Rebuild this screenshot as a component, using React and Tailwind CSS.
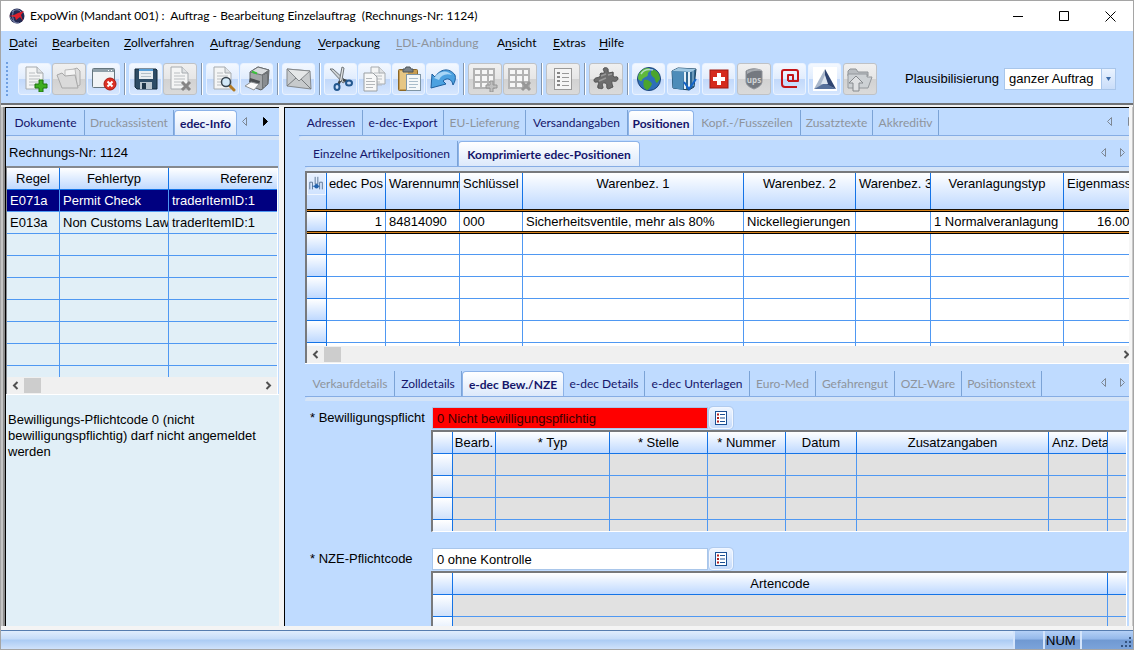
import React from "react";
import clsx from "clsx";

/* ---------- toolbar icons ---------- */

const Icon = ({ children }) => (
  <svg width="26" height="26" viewBox="0 0 26 26" aria-hidden="true">
    {children}
  </svg>
);

const Page = ({ x = 4, y = 1, w = 17, h = 22 }) => (
  <g>
    <path
      d={`M${x} ${y}h${w - 6}l6 6v${h - 6}h-${w}z`}
      fill="#f4f5f5"
      stroke="#a6abaf"
    />
    <path d={`M${x + w - 6} ${y}v6h6`} fill="#dfe2e4" stroke="#a6abaf" />
    <path
      d={`M${x + 3} ${y + 6}h6M${x + 3} ${y + 9}h${w - 6}M${x + 3} ${y + 12}h${w - 6}M${x + 3} ${y + 15}h${w - 8}M${x + 3} ${y + 18}h${w - 6}`}
      stroke="#b9bdc0"
    />
  </g>
);

const NewIcon = () => (
  <Icon>
    <Page />
    <path
      d="M17 14h4v4h4v4h-4v4h-4v-4h-4v-4h4z"
      fill="#3fae1f"
      stroke="#1f7410"
    />
  </Icon>
);

const OpenIcon = () => (
  <Icon>
    <path d="M13 5l8-3 3 3v14l-4 2z" fill="#dedede" stroke="#ababab" />
    <path d="M9 4l10-1 2 15H9z" fill="#f4f4f4" stroke="#bababa" />
    <path d="M1 9l5-2 3 3 10-1 3 13H6z" fill="#dadada" stroke="#a8a8a8" />
  </Icon>
);

const CloseWindowIcon = () => (
  <Icon>
    <rect x="1.500" y="2.500" width="22" height="19" rx="1" fill="#f1f4f6" stroke="#66767e" />
    <path d="M2 3h21v3H2z" fill="#8fa0aa" />
    <path d="M17 4.500h1M20 4.500h1" stroke="#fff" />
    <circle cx="19" cy="18" r="6" fill="#dc3023" stroke="#a81a12" />
    <path d="M16.500 15.500l5 5M21.500 15.500l-5 5" stroke="#fff" strokeWidth="2" />
  </Icon>
);

const SaveIcon = () => (
  <Icon>
    <path d="M2 3h21l1 1v19H4l-2-2z" fill="#2d4c66" stroke="#152b3d" />
    <rect x="6" y="3" width="14" height="10" fill="#e9eef2" />
    <path d="M6 4h14" stroke="#5aa0d8" strokeWidth="2" />
    <path d="M8 7.500h10M8 10.500h10" stroke="#b3bfc8" />
    <rect x="7" y="16" width="12" height="7" fill="#b9c5ce" />
    <rect x="9" y="17" width="4" height="6" fill="#1d3447" />
  </Icon>
);

const DeleteDocIcon = () => (
  <Icon>
    <Page />
    <path d="M15 16l8 8M23 16l-8 8" stroke="#858585" strokeWidth="3" />
  </Icon>
);

const PreviewIcon = () => (
  <Icon>
    <Page />
    <path d="M20 20l4 4" stroke="#b27a24" strokeWidth="3" strokeLinecap="round" />
    <circle cx="16" cy="16" r="4.500" fill="#d3e9f8" stroke="#38444d" strokeWidth="1.500" />
  </Icon>
);

const PrinterIcon = () => (
  <Icon>
    <path d="M6 6l8-5 11 3-1 14-7 6-11-4z" fill="#a3a6a8" stroke="#5d6164" />
    <path d="M6 6l8-5 11 3-7 5z" fill="#d9dcde" stroke="#6a6e71" />
    <path d="M18 9l7-5-1 14-6 6z" fill="#6f7376" />
    <path d="M20 9v12M22 8v11" stroke="#a2a6a9" />
    <path d="M8 5.500l5 2" stroke="#3cc23c" strokeWidth="2" />
    <path d="M6 12l10 3-1 4-10-3z" fill="#4a4e51" />
    <path d="M1 20l6-4 8 2-5 6z" fill="#fafafa" stroke="#8d9194" />
  </Icon>
);

const MailIcon = () => (
  <Icon>
    <path d="M1 3l23 2 1 18-24 -3z" fill="#c7cacc" stroke="#85898c" />
    <path d="M1 20l9-8M25 23l-10-10" stroke="#777b7e" />
    <path d="M1 3l12 12L24 5z" fill="#e5e7e8" stroke="#85898c" />
  </Icon>
);

const CutIcon = () => (
  <Icon>
    <path d="M2 3l3 0 13 12-3 2z" fill="#cdd1d4" stroke="#6e7478" />
    <path d="M14 1l2 1-2 12-3 3z" fill="#e4e6e8" stroke="#6e7478" />
    <path d="M15 14l4 1M12 15l-2 4" stroke="#3d4347" strokeWidth="2.500" />
    <ellipse cx="21" cy="17" rx="3" ry="2.500" fill="none" stroke="#24588f" strokeWidth="2" />
    <ellipse cx="9" cy="21" rx="2.500" ry="3" fill="none" stroke="#24588f" strokeWidth="2" />
  </Icon>
);

const CopyIcon = () => (
  <Icon>
    <Page x={9} y={1} w={14} h={17} />
    <path d="M2 7h9l4 4v14H2z" fill="#f7f8f8" stroke="#9a9fa3" />
    <path d="M4 12.500h6M4 15.500h9M4 18.500h9M4 21.500h7" stroke="#b3b7ba" />
  </Icon>
);

const PasteIcon = () => (
  <Icon>
    <rect x="2.500" y="3.500" width="19" height="21" rx="1" fill="#c99d52" stroke="#8b6726" />
    <path d="M4 5h8v18H4z" fill="#e6c684" />
    <path d="M7 3h2l1-2h4l1 2h2v3H7z" fill="#7a8288" stroke="#4d5459" />
    <rect x="10.500" y="8.500" width="14" height="16" fill="#f5f8fa" stroke="#7f95a5" />
    <path d="M13 12.500h9M13 15.500h9M13 18.500h9M13 21.500h7" stroke="#a9bccb" />
  </Icon>
);

const UndoIcon = () => (
  <Icon>
    <path
      d="M1 22l1-14 3 3C10 3 19 1 25 9c1 3 0 7-2 10-1-6-6-8-10-4l3 3z"
      fill="#4ba1e0"
      stroke="#1d5f9e"
    />
    <path d="M4 12c6-8 13-8 18-3-6-2-11 0-13 5z" fill="#a8d6f6" />
  </Icon>
);

const GridBase = () => (
  <g>
    <rect x="1" y="2" width="22" height="21" fill="#b3b3b3" />
    <path
      d="M3 4h5v4H3zM10 4h5v4h-5zM17 4h4v4h-4zM3 10h5v5H3zM10 10h5v5h-5zM17 10h4v5h-4zM3 17h5v4H3zM10 17h5v4h-5zM17 17h4v4h-4z"
      fill="#f6f6f6"
    />
  </g>
);

const GridAddIcon = () => (
  <Icon>
    <GridBase />
    <path d="M18 15h3v4h4v3h-4v4h-3v-4h-4v-3h4z" fill="#c0c0c0" stroke="#949494" />
  </Icon>
);

const GridRemoveIcon = () => (
  <Icon>
    <GridBase />
    <path d="M15 16l8 8M23 16l-8 8" stroke="#979797" strokeWidth="3" />
  </Icon>
);

const ListIcon = () => (
  <Icon>
    <rect x="4.500" y="2.500" width="17" height="21" fill="#f5f5f5" stroke="#999" />
    <path d="M7 7h3M7 11h3M7 15h3M7 19h3" stroke="#858585" strokeWidth="2" />
    <path d="M12 7.500h7M12 11.500h7M12 15.500h7M12 19.500h7" stroke="#999" />
  </Icon>
);

const PuzzleIcon = () => (
  <Icon>
    <path
      d="M7 8c1-2 3 0 4-1 1-2-2-3 0-5 2-1 5 0 4 3 0 2 2 2 5 1 1 2-1 4 1 5 2 0 3-1 4 1 0 3-3 4-5 3-2 0-1 3 0 6-3 1-5 3-6 1s1-4-2-5-3 2-2 4c0 2-1 2-5 1-1-3 2-5 0-6-2 0-4 1-4-2 1-3 4-2 5-3 2 0 1-2 1-3z"
      fill="#6d6d6d"
      stroke="#4f4f4f"
    />
    <path d="M8 10l5-2M15 9l4-1M6 15l7-3" stroke="#9a9a9a" strokeWidth="1.500" />
  </Icon>
);

const GlobeIcon = () => (
  <Icon>
    <circle cx="13" cy="13" r="11.500" fill="#2e6fb8" stroke="#1b4379" />
    <path d="M5 5c4-4 9-3 9-2 1 3-3 3-2 6-2 3-5 2-6 5 0 2-2 1-4-1 0-4 1-6 3-8z" fill="#5fb93c" />
    <path d="M16 4c4-1 8 4 8 9l-3 4c-3-2-1-5-4-6-2-2-3-4-1-7zM8 14c4-1 7 2 8 4-2 4-4 6-5 6-4-2-4-6-3-10z" fill="#4ba52c" />
    <path d="M5 8c3-5 8-5 12-4" stroke="#d5ecff" strokeWidth="1.500" fill="none" opacity=".7" />
  </Icon>
);

const BooksIcon = () => (
  <Icon>
    <path d="M1 5l6-3 18 1-2 18-5 3-16-2z" fill="#2f6690" stroke="#1b435f" />
    <path d="M1 5l12 1-1 18-10-2z" fill="#4d8cb9" />
    <path d="M7 2l18 1-5 3-19-1z" fill="#9fc8e3" />
    <path d="M14 6v17M18 6v17" stroke="#e5f1f8" strokeWidth="2" />
    <path d="M22 4v16" stroke="#a8cde5" />
    <path d="M13 16l5 7 7-10" stroke="#1464c8" strokeWidth="2" fill="none" />
  </Icon>
);

const SwissIcon = () => (
  <Icon>
    <rect x="4" y="4" width="18" height="18" fill="#d52b1e" stroke="#9f1a12" />
    <path d="M11 7h4v4h4v4h-4v4h-4v-4H7v-4h4z" fill="#fff" />
  </Icon>
);

const UpsIcon = () => (
  <Icon>
    <path d="M5 5c5-3 11-3 16 0v10c0 4-3 6-8 8-5-2-8-4-8-8z" fill="#747980" stroke="#8f9398" />
    <path d="M6 8c4-3 9-4 15-3v-1C16 2 10 3 6 5z" fill="#a8acb1" />
    <text x="13" y="17" textAnchor="middle" fontFamily="Open Sans" fontWeight="700" fontSize="8" fill="#d0d3d6">
      ups
    </text>
  </Icon>
);

const SpiralIcon = () => (
  <Icon>
    <path
      d="M11 15V9h5v6h-5M16 15h5V6q0-2-2-2H7Q5 4 5 6v12q0 3 3 3h12"
      fill="none"
      stroke="#c41418"
      strokeWidth="2"
      strokeLinejoin="round"
    />
  </Icon>
);

const TriangleIcon = () => (
  <Icon>
    <path d="M1 1h24v24H1z" fill="#fff" />
    <path d="M13 3L2 23l11-5z" fill="#a9b7cb" />
    <path d="M13 3l11 20-11-5z" fill="#2f4470" />
    <path d="M2 23l11-6 11 6z" fill="#56709b" />
    <path d="M13 9l-4 9h7z" fill="#dde5ef" />
  </Icon>
);

const UploadIcon = () => (
  <Icon>
    <path d="M1 5l2-2h6l2 3h10v4H1z" fill="#b9bdc1" stroke="#8f9397" />
    <path d="M1 22V8h19v3h5l-4 11z" fill="#cdd1d4" stroke="#94989c" />
    <path d="M9 10l7 7h-4v8H6v-8H2z" fill="#dfe1e3" stroke="#85898d" />
  </Icon>
);

const ListBoxIcon = () => (
  <svg width="14" height="16" viewBox="0 0 14 16" aria-hidden="true">
    <rect x="1.500" y="1.500" width="11" height="13" fill="#fff" stroke="#1b4f93" />
    <path d="M3 4.500h2M3 8h2M3 11.500h2" stroke="#b01c1c" strokeWidth="2" />
    <path d="M6 4.500h5M6 8h5M6 11.500h5" stroke="#1b4f93" />
  </svg>
);

const Logo = () => (
  <svg width="16" height="16" viewBox="0 0 16 16" aria-hidden="true">
    <circle cx="8" cy="8" r="7.500" fill="#232a52" />
    <path d="M3 4c3-3 7-3 9 0M1 9c2 4 5 6 9 6M5 2c-2 4-2 8 1 13" stroke="#7d86ad" fill="none" />
    <path d="M0 8l5-1 4-2 6-2-3 4 2 6-3-4-4 3-1-3z" fill="#e0202c" />
  </svg>
);

/* ---------- data ---------- */

const menus = [
  { label: "Datei", width: "w-[43px]" },
  { label: "Bearbeiten", width: "w-[72px]" },
  { label: "Zollverfahren", width: "w-[86px]" },
  { label: "Auftrag/Sendung", width: "w-[108px]" },
  { label: "Verpackung", width: "w-[78px]" },
  { label: "LDL-Anbindung", width: "w-[101px]", disabled: true },
  { label: "Ansicht", width: "w-[56px]", accel: 1 },
  { label: "Extras", width: "w-[46px]" },
  { label: "Hilfe", width: "w-[40px]" },
];

const toolGroups = [
  [
    { title: "Neu", icon: NewIcon },
    { title: "Öffnen", icon: OpenIcon, disabled: true },
    { title: "Schliessen", icon: CloseWindowIcon },
  ],
  [
    { title: "Speichern", icon: SaveIcon },
    { title: "Löschen", icon: DeleteDocIcon, disabled: true },
  ],
  [
    { title: "Vorschau", icon: PreviewIcon },
    { title: "Drucken", icon: PrinterIcon },
  ],
  [{ title: "E-Mail", icon: MailIcon }],
  [
    { title: "Ausschneiden", icon: CutIcon },
    { title: "Kopieren", icon: CopyIcon },
    { title: "Einfügen", icon: PasteIcon },
    { title: "Rückgängig", icon: UndoIcon },
  ],
  [
    { title: "Zeile einfügen", icon: GridAddIcon, disabled: true },
    { title: "Zeile löschen", icon: GridRemoveIcon, disabled: true },
  ],
  [{ title: "Liste", icon: ListIcon, disabled: true }],
  [{ title: "Module", icon: PuzzleIcon, disabled: true }],
  [
    { title: "Internet", icon: GlobeIcon },
    { title: "Archiv", icon: BooksIcon },
    { title: "Zoll", icon: SwissIcon },
    { title: "UPS", icon: UpsIcon, disabled: true },
    { title: "e-dec", icon: SpiralIcon },
    { title: "Atlas", icon: TriangleIcon },
    { title: "Hochladen", icon: UploadIcon, disabled: true },
  ],
];

const leftTabs = [
  { label: "Dokumente", width: "w-[78px]" },
  { label: "Druckassistent", width: "w-[89px]", disabled: true },
  { label: "edec-Info", width: "w-[63px]", active: true },
];

const mainTabs = [
  { label: "Adressen", width: "w-[63px]" },
  { label: "e-dec-Export", width: "w-[81px]" },
  { label: "EU-Lieferung", width: "w-[82px]", disabled: true },
  { label: "Versandangaben", width: "w-[102px]" },
  { label: "Positionen", width: "w-[66px]", active: true },
  { label: "Kopf.-/Fusszeilen", width: "w-[107px]", disabled: true },
  { label: "Zusatztexte", width: "w-[72px]", disabled: true },
  { label: "Akkreditiv", width: "w-[66px]", disabled: true },
];

const positionTabs = [
  { label: "Einzelne Artikelpositionen", width: "w-[152px]" },
  { label: "Komprimierte edec-Positionen", width: "w-[182px]", active: true },
];

const detailTabs = [
  { label: "Verkaufdetails", width: "w-[89px]", disabled: true },
  { label: "Zolldetails", width: "w-[67px]" },
  { label: "e-dec Bew./NZE", width: "w-[102px]", active: true },
  { label: "e-dec Details", width: "w-[81px]" },
  { label: "e-dec Unterlagen", width: "w-[105px]" },
  { label: "Euro-Med", width: "w-[66px]", disabled: true },
  { label: "Gefahrengut", width: "w-[79px]", disabled: true },
  { label: "OZL-Ware", width: "w-[67px]", disabled: true },
  { label: "Positionstext", width: "w-[80px]", disabled: true },
];

const positionColumns = [
  { label: "edec Pos", width: "w-[59px]", value: "1", align: "text-right" },
  { label: "Warennummer", width: "w-[74px]", value: "84814090", left: true },
  { label: "Schlüssel", width: "w-[63px]", value: "000", left: true },
  { label: "Warenbez. 1", width: "w-[221px]", value: "Sicherheitsventile, mehr als 80%" },
  { label: "Warenbez. 2", width: "w-[112px]", value: "Nickellegierungen" },
  { label: "Warenbez. 3", width: "w-[75px]", value: "", left: true },
  { label: "Veranlagungstyp", width: "w-[133px]", value: "1 Normalveranlagung" },
  { label: "Eigenmasse", width: "w-auto", value: "16.000", left: true, align: "indent-[30px]" },
];

const permitColumns = [
  { label: "", width: "w-[20px]" },
  { label: "Bearb.", width: "w-[43px]" },
  { label: "* Typ", width: "w-[114px]" },
  { label: "* Stelle", width: "w-[98px]" },
  { label: "* Nummer", width: "w-[78px]" },
  { label: "Datum", width: "w-[71px]" },
  { label: "Zusatzangaben", width: "w-auto" },
  { label: "Anz. Details", width: "w-[59px]", left: true },
  { label: "", width: "w-[18px]" },
];

const nzeColumns = [
  { label: "", width: "w-[20px]" },
  { label: "Artencode", width: "w-auto" },
  { label: "", width: "w-[18px]" },
];

const errors = [
  ["E071a", "Permit Check", "traderItemID:1"],
  ["E013a", "Non Customs Law", "traderItemID:1"],
];

/* ---------- building blocks ---------- */

const ToolButton = ({ title, icon: Glyph, disabled }) => (
  <button
    title={title}
    disabled={disabled}
    className={clsx(
      "flex h-8 items-center justify-center rounded-[3px] border",
      disabled
        ? "w-[34px] border-[#bfc2c6] bg-[linear-gradient(#f0f0f0,#e6e6e6_50%,#d2d2d2_50%,#dadada)]"
        : "w-[33px] border-[#e9f2ff] bg-[linear-gradient(#f3f8ff,#e0ecfd_50%,#c1d8fa_50%,#d5e6fe)]"
    )}
  >
    <Glyph />
  </button>
);

const Arrow = ({ dir, solid }) => (
  <svg width="7" height="11" viewBox="0 0 7 11" aria-hidden="true" className="shrink-0">
    <path
      d={dir === "left" ? "M5.500 1.500v8l-4-4z" : "M1.500 1.500v8l4-4z"}
      fill={solid ? "#000" : "none"}
      stroke={solid ? "#000" : "#7d8794"}
    />
  </svg>
);

const TabStrip = ({ tabs, children }) => (
  <div>
    <div className="flex h-7 items-end border-b border-[#86ade4]">
      <div role="tablist" className="flex min-w-0 flex-1 items-end overflow-hidden pl-px">
        {tabs.map((tab) => (
          <button
            key={tab.label}
            role="tab"
            aria-selected={!!tab.active}
            disabled={tab.disabled}
            className={clsx(
              "h-[25px] shrink-0 pt-px text-center font-['Lato',sans-serif] text-[12px] whitespace-nowrap",
              tab.width,
              tab.active
                ? "rounded-t-sm border border-b-0 border-[#8db3e8] bg-linear-to-b from-white to-[#dce9fb] font-bold text-[#15156a]"
                : "border-r border-[#7ba3d6]",
              !tab.active && (tab.disabled ? "text-[#8e949c]" : "text-[#15156a]")
            )}
          >
            {tab.label}
          </button>
        ))}
      </div>
      <div className="flex h-full shrink-0 items-center">{children}</div>
    </div>
    <div className="h-1 rounded-tl-md bg-[#d5e4f7]" />
  </div>
);

const HEAD =
  "overflow-hidden border-r border-b border-[#1473e6] bg-linear-to-b from-white to-[#bfd9ff] p-0 text-center align-top font-normal whitespace-nowrap";

const Scrollbar = ({ right = true }) => (
  <div className="flex h-[17px] shrink-0 items-center bg-[#f0f0f0]">
    <button aria-label="Nach links" className="flex w-[17px] justify-center">
      <svg width="7" height="9" viewBox="0 0 7 9">
        <path d="M5.500 1L2 4.500 5.500 8" fill="none" stroke="#505050" strokeWidth="2" />
      </svg>
    </button>
    <div className="h-[15px] w-[17px] bg-[#cdcdcd]" />
    <div className="flex-1" />
    <button
      aria-label="Nach rechts"
      className={clsx("flex justify-center", right ? "w-[17px]" : "w-[6px]")}
    >
      <svg width="7" height="9" viewBox="0 0 7 9" className="shrink-0">
        <path d="M1.500 1L5 4.500 1.500 8" fill="none" stroke="#505050" strokeWidth="2" />
      </svg>
    </button>
  </div>
);

const MarkerRow = () => (
  <tr aria-hidden="true">
    <td
      colSpan={9}
      className="h-[3px] bg-[linear-gradient(#1d1204_1px,#d9821a_1px,#d9821a_2px,#000_2px)] p-0"
    />
  </tr>
);

const EmptyGrid = ({ label, columns, rows }) => (
  <table aria-label={label} className="w-full table-fixed border-separate border-spacing-0 bg-[#e1e1e1]">
    <thead>
      <tr>
        {columns.map((col, i) => (
          <th
            key={i}
            scope="col"
            className={clsx(
              HEAD,
              "h-[22px] leading-[21px] last:border-r-0",
              col.width,
              col.left && "pl-[3px] text-left"
            )}
          >
            {col.label}
          </th>
        ))}
      </tr>
    </thead>
    <tbody>
      {Array.from({ length: rows }, (_, r) => (
        <tr key={r}>
          {columns.map((col, i) => (
            <td
              key={i}
              className={clsx(
                "h-[22px] border-r border-b p-0 last:border-r-0",
                i === 0
                  ? "border-[#1473e6] bg-linear-to-b from-white to-[#cfe1fb]"
                  : "border-[#4f98f2]"
              )}
            />
          ))}
        </tr>
      ))}
    </tbody>
  </table>
);

const CodeField = ({ id, label, value, invalid }) => (
  <div className="flex h-[22px] items-center">
    <label htmlFor={id} className="w-[127px] shrink-0 pl-[5px] whitespace-nowrap">
      {label}
    </label>
    <input
      id={id}
      defaultValue={value}
      className={clsx(
        "h-[22px] w-[276px] border border-[#a9c6ea] px-1 outline-none",
        invalid ? "bg-[#ff0000] text-[#3a0000]" : "bg-white"
      )}
    />
    <button
      aria-label={`${label} Auswahl`}
      className="ml-px flex h-[22px] w-6 items-center justify-center rounded-sm border border-[#f2f7ff] bg-linear-to-b from-[#eef5ff] to-[#c6dbfa] shadow-[0_0_0_1px_#b1cbee]"
    >
      <ListBoxIcon />
    </button>
  </div>
);

/* ---------- window parts ---------- */

const TitleBar = () => (
  <header className="flex h-[30px] shrink-0 items-center bg-white pl-2 font-['Lato',sans-serif] text-[12px]">
    <Logo />
    <h1 className="ml-[5px] flex-1 whitespace-pre">
      {"ExpoWin (Mandant 001) :  Auftrag - Bearbeitung Einzelauftrag  (Rechnungs-Nr: 1124)"}
    </h1>
    <button aria-label="Minimieren" className="flex w-[46px] justify-center">
      <svg width="10" height="10"><path d="M0 5.500h10" stroke="#000" /></svg>
    </button>
    <button aria-label="Maximieren" className="flex w-[46px] justify-center">
      <svg width="10" height="10"><path d="M.5.5h9v9h-9z" fill="none" stroke="#000" /></svg>
    </button>
    <button aria-label="Schliessen" className="flex w-[46px] justify-center">
      <svg width="11" height="11"><path d="M.5.500l10 10M10.500.5l-10 10" stroke="#000" /></svg>
    </button>
  </header>
);

const MenuBar = () => (
  <nav className="flex h-6 shrink-0 items-center pl-2 font-['Lato',sans-serif] text-[12px]">
    {menus.map(({ label, width, disabled, accel = 0 }) => (
      <button
        key={label}
        disabled={disabled}
        className={clsx("shrink-0 text-left whitespace-nowrap", width, disabled && "text-[#8e949c]")}
      >
        {label.slice(0, accel)}
        <span className="underline underline-offset-2">{label[accel]}</span>
        {label.slice(accel + 1)}
      </button>
    ))}
  </nav>
);

const Toolbar = () => (
  <div className="flex h-12 shrink-0 items-center pl-[5px]">
    <div className="mr-[10px] h-[34px] w-[2px] bg-[repeating-linear-gradient(#6f9fe0_0_2px,transparent_2px_4px)]" />
    {toolGroups.map((group, i) => (
      <React.Fragment key={i}>
        {i > 0 && <div className="mr-[3px] ml-1 h-8 w-[2px] border-r border-l border-l-[#8496ad] border-r-white" />}
        <div className={clsx("flex", group.length > 4 ? "gap-[2px]" : "gap-px")}>
          {group.map((tool) => (
            <ToolButton key={tool.title} {...tool} />
          ))}
        </div>
      </React.Fragment>
    ))}
    <div className="mr-[17px] ml-auto flex items-center gap-[5px]">
      <label htmlFor="scope">Plausibilisierung</label>
      <div className="relative">
        <select
          id="scope"
          className="h-[22px] w-[112px] appearance-none border border-[#a9c6ea] bg-white pl-1"
        >
          <option>ganzer Auftrag</option>
        </select>
        <span className="pointer-events-none absolute top-px right-px flex h-5 w-[14px] items-center justify-center border-l border-[#a9c6ea] bg-linear-to-b from-[#eaf3ff] to-[#c9ddf9]">
          <svg width="5" height="4"><path d="M0 0h5L2.500 4z" fill="#3d6ca8" /></svg>
        </span>
      </div>
    </div>
  </div>
);

const InfoPanel = () => (
  <aside className="flex w-[274px] shrink-0 flex-col border-t border-l border-black bg-[#bfdbff]">
    <TabStrip tabs={leftTabs}>
      <button aria-label="Zurück" className="mr-[14px]"><Arrow dir="left" /></button>
      <button aria-label="Weiter" className="mr-[10px]"><Arrow dir="right" solid /></button>
    </TabStrip>
    <p className="h-[26px] pl-[3px] leading-[26px]">Rechnungs-Nr: 1124</p>
    <div className="mr-px border-t-2 border-l border-[#85898e] bg-white pr-px">
      <div className="h-[209px] overflow-hidden bg-[#e1eff7]">
        <table aria-label="Fehler" className="w-[318px] table-fixed border-separate border-spacing-0">
          <thead>
            <tr>
              <th scope="col" className={clsx(HEAD, "h-[22px] w-[53px] leading-[21px]")}>Regel</th>
              <th scope="col" className={clsx(HEAD, "h-[22px] w-[109px] leading-[21px]")}>Fehlertyp</th>
              <th scope="col" className={clsx(HEAD, "h-[22px] w-[156px] leading-[21px]")}>Referenz</th>
            </tr>
          </thead>
          <tbody>
            {Array.from({ length: 9 }, (_, r) => (
              <tr key={r} className={r === 0 ? "bg-[#000080] text-white" : undefined}>
                {(errors[r] || ["", "", ""]).map((text, c) => (
                  <td
                    key={c}
                    className="h-[22px] overflow-hidden border-r border-b border-[#4f98f2] p-0 pl-[3px] leading-5 whitespace-nowrap"
                  >
                    {text}
                  </td>
                ))}
              </tr>
            ))}
          </tbody>
        </table>
      </div>
      <Scrollbar />
    </div>
    <p className="flex-1 border-t border-white bg-[#e1eff7] pt-[17px] pr-2 pl-[2px] leading-4">
      Bewilligungs-Pflichtcode 0 (nicht bewilligungspflichtig) darf nicht angemeldet werden
    </p>
  </aside>
);

const PositionGrid = () => (
  <div className="border-t-2 border-l-2 border-[#77797c]">
    <div className="h-[173px] overflow-hidden bg-white">
      <table aria-label="Positionen" className="w-full table-fixed border-separate border-spacing-0">
        <thead>
          <tr>
            <th
              scope="col"
              aria-label="Spalten"
              className="h-9 w-[20px] border-r border-[#1473e6] bg-linear-to-b from-[#e8f1ff] to-[#bfd9ff] p-0 align-top"
            >
              <svg width="19" height="22" viewBox="0 0 19 22" className="border border-[#f0f6ff]">
                <path d="M2 17V9h3v8M8 3v8h3V3M13 17V9h3v8" fill="none" stroke="#55708f" />
                <circle cx="9.500" cy="13.500" r="2.500" fill="#2363ad" />
                <path d="M5 13.500h8" stroke="#2363ad" />
              </svg>
            </th>
            {positionColumns.map((col) => (
              <th
                key={col.label}
                scope="col"
                className={clsx(
                  HEAD,
                  "h-9 border-b-0 leading-[22px] last:border-r-0",
                  col.width,
                  col.left && "pl-[3px] text-left"
                )}
              >
                {col.label}
              </th>
            ))}
          </tr>
        </thead>
        <tbody>
          <MarkerRow />
          <tr>
            <td className="h-[19px] border-r border-[#1473e6] bg-linear-to-b from-white to-[#bfd9ff] p-0" />
            {positionColumns.map((col) => (
              <td
                key={col.label}
                className={clsx(
                  "h-[19px] overflow-hidden border-r border-[#4f98f2] p-0 px-[3px] leading-[19px] whitespace-nowrap last:border-r-0",
                  col.align
                )}
              >
                {col.value}
              </td>
            ))}
          </tr>
          <MarkerRow />
          {Array.from({ length: 6 }, (_, r) => (
            <tr key={r}>
              <td
                className={clsx(
                  "border-r border-b border-[#1473e6] bg-linear-to-b from-white to-[#bfd9ff] p-0",
                  r === 0 ? "h-[21px]" : "h-[22px]"
                )}
              />
              {positionColumns.map((col) => (
                <td key={col.label} className="border-r border-b border-[#4f98f2] p-0 last:border-r-0" />
              ))}
            </tr>
          ))}
        </tbody>
      </table>
    </div>
    <Scrollbar right={false} />
  </div>
);

const Workspace = () => (
  <main className="flex min-w-0 flex-1 flex-col overflow-hidden border-t border-l border-black bg-[#bfdbff]">
    <div className="ml-[14px]">
      <TabStrip tabs={mainTabs}>
        <button aria-label="Zurück" className="mr-[14px]"><Arrow dir="left" /></button>
        <button aria-label="Weiter" className="flex w-[2px] overflow-hidden"><Arrow dir="right" /></button>
      </TabStrip>
    </div>
    <div className="ml-5 flex flex-1 flex-col">
      <div className="-mt-px">
        <TabStrip tabs={positionTabs}>
          <button aria-label="Zurück" className="mr-3"><Arrow dir="left" /></button>
          <button aria-label="Weiter" className="mr-[3px]"><Arrow dir="right" /></button>
        </TabStrip>
      </div>
      <PositionGrid />
      <div className="border-t border-white pt-[5px]">
        <TabStrip tabs={detailTabs}>
          <button aria-label="Zurück" className="mr-3"><Arrow dir="left" /></button>
          <button aria-label="Weiter" className="mr-[3px]"><Arrow dir="right" /></button>
        </TabStrip>
      </div>
      <div className="mt-[6px]">
        <CodeField id="bewilligung" label="* Bewilligungspflicht" value="0 Nicht bewilligungspflichtig" invalid />
      </div>
      <div className="mt-px mr-[2px] ml-[126px] h-[102px] overflow-hidden border-t-2 border-r border-b border-l-2 border-[#77797c] border-r-white border-b-white">
        <EmptyGrid label="Bewilligungen" columns={permitColumns} rows={4} />
      </div>
      <div className="mt-4">
        <CodeField id="nze" label="* NZE-Pflichtcode" value="0 ohne Kontrolle" />
      </div>
      <div className="mt-px mr-[2px] ml-[126px] h-0 flex-1 overflow-hidden border-t-2 border-r border-l-2 border-[#77797c] border-r-white">
        <EmptyGrid label="Artencodes" columns={nzeColumns} rows={2} />
      </div>
    </div>
  </main>
);

const STATUS_CELL =
  "border-l-2 border-[#d3e4fb] bg-[linear-gradient(#b4d0f6,#93b8ea_45%,#7099d2_50%,#7ba3da)]";

const StatusBar = () => (
  <footer className="flex h-[19px] shrink-0 border-t border-[#567db0]">
    <div className="flex-1 bg-[linear-gradient(#e0edfd,#c5dcf9_45%,#abcbf4_50%,#cfe2fb)]" />
    <div className={clsx(STATUS_CELL, "w-[30px]")} />
    <div className={clsx(STATUS_CELL, "w-[37px] pl-px leading-5")}>NUM</div>
    <div className={clsx(STATUS_CELL, "flex w-[53px] items-end justify-end p-[2px]")}>
      <svg width="10" height="10" aria-hidden="true">
        <path d="M8 0h2v2H8zM4 4h2v2H4zM8 4h2v2H8zM0 8h2v2H0zM4 8h2v2H4zM8 8h2v2H8z" fill="#35547f" />
      </svg>
    </div>
  </footer>
);

export default function App() {
  return (
    <div className="flex h-screen flex-col overflow-hidden border border-[#a5a5a5] bg-[#bfdbff] font-['Liberation_Sans',Arial,sans-serif] text-[13px] text-black">
      <TitleBar />
      <MenuBar />
      <Toolbar />
      <div className="flex min-h-0 flex-1 border-t-2 border-[#6f7276] bg-[#f0f0f0] pt-[2px]">
        <div className="w-1 shrink-0 border-r-2 border-[#8b8b8b] bg-[#c4c4c4]" />
        <InfoPanel />
        <div className="w-[5px] shrink-0 bg-[#f4f4f4]" />
        <Workspace />
        <div className="w-1 shrink-0 border-r border-[#c9c9c9] bg-[#f6f6f6]" />
      </div>
      <div className="h-1 shrink-0 bg-[#f4f4f4]" />
      <StatusBar />
    </div>
  );
}
